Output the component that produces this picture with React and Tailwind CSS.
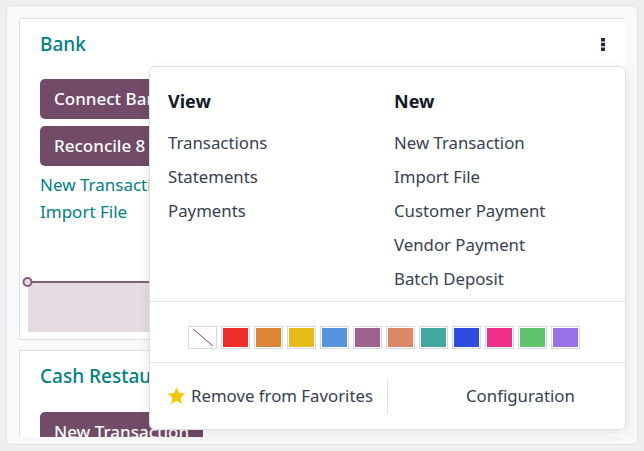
import { Fragment } from 'react'

const viewItems = ['Transactions', 'Statements', 'Payments']
const newItems = ['New Transaction', 'Import File', 'Customer Payment', 'Vendor Payment', 'Batch Deposit']
const swatches = ['#ee2d2d', '#dc8534', '#e8bb1d', '#5794dd', '#9f628f', '#db8865', '#41a9a2', '#304be0', '#ee2f8a', '#61c36e', '#9872e6']

function Kebab() {
  return (
    <svg width="4" height="13" viewBox="0 0 4 13" className="fill-[#1f2937]">
      <rect x="0" y="0" width="4" height="3.5" />
      <rect x="0" y="4.75" width="4" height="3.5" />
      <rect x="0" y="9.5" width="4" height="3.5" />
    </svg>
  )
}

function Star() {
  return (
    <svg width="19" height="18" viewBox="0 0 24 23">
      <polygon
        points="12,0.5 15.2,7.8 23.2,8.5 17.1,13.8 19,21.6 12,17.5 5,21.6 6.9,13.8 0.8,8.5 8.8,7.8"
        fill="#f3c800"
      />
    </svg>
  )
}

function Graph() {
  return (
    <svg width="604" height="58" viewBox="0 0 604 58" className="block">
      <rect x="8" y="7" width="592" height="50" fill="#e5dbe2" />
      <line x1="8" y1="7" x2="600" y2="7" stroke="#865c7c" strokeWidth="2" />
      <circle cx="7.5" cy="7" r="4" fill="#e5dbe2" stroke="#865c7c" strokeWidth="2" />
    </svg>
  )
}

function Btn({ children }) {
  return (
    <div className="inline-flex h-[40px] items-center whitespace-nowrap rounded-[5px] bg-[#714b67] px-[14px] text-[17px] font-medium text-white">
      {children}
    </div>
  )
}

function Dropdown() {
  return (
    <div className="absolute left-[149px] top-[66px] flex h-[364px] w-[477px] flex-col rounded-[6px] border border-[#dcdfe3] bg-white shadow-[0_4px_12px_rgba(0,0,0,0.10)]">
      <div className="flex pl-[18px] pt-[22px]">
        <div className="w-[226px]">
          <div className="h-[24px] text-[18px] font-bold leading-[24px] text-[#111827]">View</div>
          <div className="mt-[13px]">
            {viewItems.map(t => (
              <div key={t} className="flex h-[34px] items-center text-[16.8px] text-[#374151]">{t}</div>
            ))}
          </div>
        </div>
        <div>
          <div className="h-[24px] text-[18px] font-bold leading-[24px] text-[#111827]">New</div>
          <div className="mt-[13px]">
            {newItems.map(t => (
              <div key={t} className="flex h-[34px] items-center text-[16.8px] text-[#374151]">{t}</div>
            ))}
          </div>
        </div>
      </div>
      <div className="mt-[5px] border-t border-[#dee2e6]" />
      <div className="flex gap-[4px] pb-[13px] pl-[38px] pt-[24px]">
        <div className="relative h-[23px] w-[29px] overflow-hidden border border-[#d8dadf] bg-white">
          <svg width="27" height="21" className="absolute left-0 top-0">
            <line x1="4" y1="2" x2="24" y2="19" stroke="#a23a5c" strokeWidth="1" />
          </svg>
        </div>
        {swatches.map(c => (
          <div key={c} className="h-[23px] w-[29px] border border-[#d8dadf] bg-white p-[1px]">
            <div className="h-full w-full" style={{ backgroundColor: c }} />
          </div>
        ))}
      </div>
      <div className="border-t border-[#dee2e6]" />
      <div className="flex flex-1 items-center">
        <div className="flex w-[237px] items-center gap-[5px] pl-[17px] text-[16.8px] text-[#374151]">
          <Star />
          <span>Remove from Favorites</span>
        </div>
        <div className="h-[35px] border-l border-[#dee2e6]" />
        <div className="pl-[78px] text-[16.8px] text-[#374151]">Configuration</div>
      </div>
    </div>
  )
}

export default function App() {
  return (
    <div className="relative h-[451px] w-[644px] overflow-hidden bg-[#efefef] px-[6px] pt-[5px] font-['Noto_Sans',sans-serif]">
      <div className="h-[440px] rounded-[6px] border border-[#e4e4e4] bg-[#f8f9fa] px-[12px] pb-[7px] pt-[12px]">
        <div className="flex h-full flex-col gap-[10px] overflow-hidden">
          <div className="w-[607px] shrink-0 border border-[#dee2e6] bg-white">
            <div className="flex h-[50px] items-center justify-between pl-[20px] pr-[20px]">
              <span className="text-[19px] font-medium text-[#017e84]">Bank</span>
              <Kebab />
            </div>
            <div className="mt-[10px] flex flex-col items-start gap-[7px] pl-[20px]">
              <Btn>Connect Bank</Btn>
              <Btn>Reconcile 8 Items</Btn>
            </div>
            <div className="mt-[5px] flex flex-col pl-[20px] text-[17px] leading-[27px] text-[#017e84]">
              <span>New Transaction</span>
              <span>Import File</span>
            </div>
            <div className="mt-[50px] pb-[6px]">
              <Graph />
            </div>
          </div>
          <div className="w-[607px] shrink-0 border border-[#dee2e6] bg-white">
            <div className="flex h-[50px] items-center pl-[20px]">
              <span className="text-[19px] font-medium text-[#017e84]">Cash Restaurant</span>
            </div>
            <div className="mt-[11px] pl-[20px]">
              <Btn>New Transaction</Btn>
            </div>
          </div>
        </div>
      </div>
      <Dropdown />
    </div>
  )
}
